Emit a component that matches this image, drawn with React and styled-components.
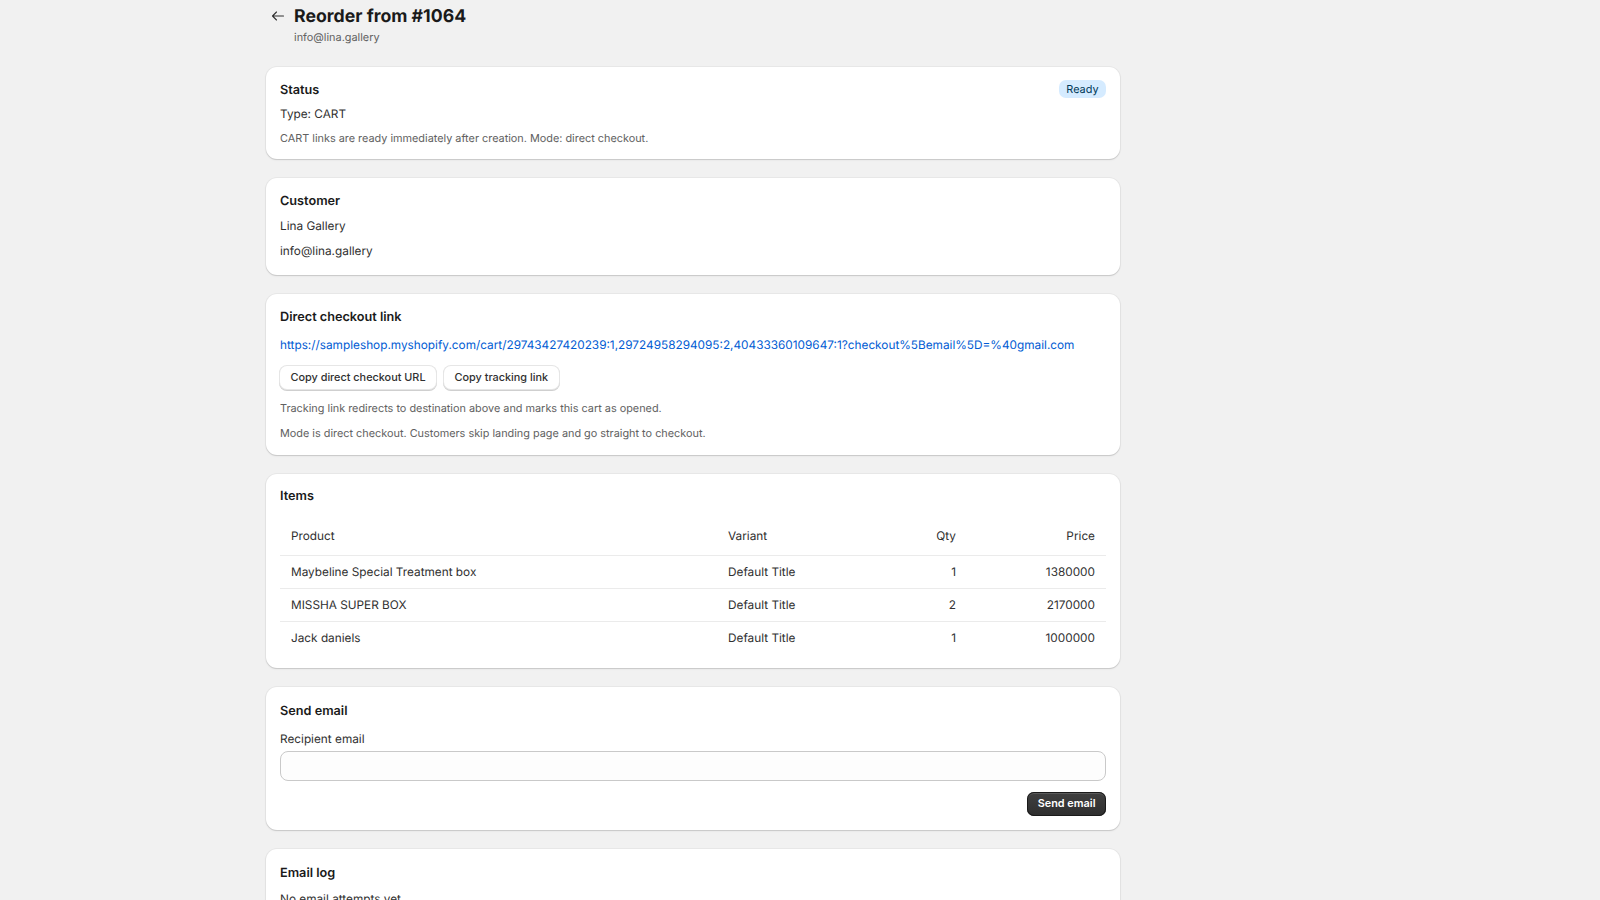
import React from "react";
import styled, { createGlobalStyle } from "styled-components";

const GlobalStyle = createGlobalStyle`
  html, body {
    margin: 0;
    height: 900px;
    overflow: hidden;
    background: #f1f1f1;
    font-family: Inter, "Liberation Sans", sans-serif;
    color: #303030;
    text-rendering: geometricPrecision;
    -webkit-font-smoothing: antialiased;
  }
`;

const Page = styled.div`
  width: 854px;
  margin-left: 266px;
  display: flex;
  flex-direction: column;
  gap: 19px;
`;

const PageHeader = styled.header`
  box-sizing: border-box;
  display: flex;
  gap: 6px;
  padding: 5px 0 0 2px;
  height: 48px;
`;

const BackButton = styled.button`
  width: 20px;
  height: 22px;
  padding: 0;
  border: 0;
  background: none;
  color: #303030;
  display: flex;
  align-items: center;
  justify-content: center;
`;

const TitleBlock = styled.div`
  display: flex;
  flex-direction: column;
`;

const Title = styled.h1`
  margin: 0;
  font-size: 17.7px;
  line-height: 24px;
  font-weight: 650;
  color: #1a1a1a;
`;

const Subtitle = styled.div`
  font-size: 10.9px;
  line-height: 16px;
  color: #616161;
`;

const Card = styled.section`
  background: #fff;
  border-radius: 11px;
  padding: ${(p) => p.$top || 14.5}px 14px ${(p) => p.$bottom || 14}px;
  box-shadow: 0 1px 0 0 rgba(26, 26, 26, 0.07), 0 0 0 1px rgba(26, 26, 26, 0.04),
    0 1px 2px rgba(26, 26, 26, 0.1);
  display: flex;
  flex-direction: column;
  gap: ${(p) => p.$gap}px;
`;

const CardTitle = styled.h2`
  margin: 0 0 -1.5px;
  font-size: 12.7px;
  line-height: 18px;
  font-weight: 600;
  color: #1a1a1a;
`;

const CardHead = styled.div`
  display: flex;
  justify-content: space-between;
  align-items: flex-start;
  margin-bottom: -1.5px;

  ${CardTitle} {
    margin: 0;
  }
`;

const Text = styled.p`
  margin: 0;
  line-height: 16px;
  color: ${(p) => (p.$muted ? "#616161" : "#303030")};
  font-size: ${(p) => (p.$muted ? "10.86px" : "11.8px")};
`;

const Badge = styled.span`
  background: #d5ebff;
  color: #003a5a;
  border-radius: 7px;
  margin-top: -1.5px;
  padding: 0 7.5px;
  font-size: 10.86px;
  line-height: 18px;
`;

const UrlLink = styled.a`
  color: #005bd3;
  font-size: 11.8px;
  line-height: 16px;
  text-decoration: none;
`;

const ButtonRow = styled.div`
  display: flex;
  gap: 8px;
  margin: 2px 0 -1px;
`;

const Button = styled.button`
  height: 23px;
  padding: 0 10.5px 1px;
  border: 0;
  border-radius: 7px;
  background: #fff;
  color: #303030;
  font: 500 10.86px Inter, sans-serif;
  box-shadow: 0 0 0 1px #e6e6e6, 0 1px 0 1px #cfcfcf;
`;

const PrimaryButton = styled(Button)`
  height: 24px;
  background: linear-gradient(#404040, #2e2e2e);
  color: #fff;
  font-weight: 600;
  box-shadow: inset 0 0 0 1px #1a1a1a, inset 0 2px 0 rgba(255, 255, 255, 0.14);
`;

const Notes = styled.div`
  display: flex;
  flex-direction: column;
  gap: 9px;
`;

const Table = styled.table`
  width: 100%;
  border-collapse: collapse;
  table-layout: fixed;
  font-size: 11.8px;
  color: #303030;
`;

const Th = styled.th`
  height: 38px;
  padding: 3px 11px 0;
  font-weight: 400;
  text-align: ${(p) => (p.$num ? "right" : "left")};
  border-bottom: 1px solid #ebebeb;
`;

const Td = styled.td`
  height: 32px;
  padding: 0 11px;
  text-align: ${(p) => (p.$num ? "right" : "left")};
`;

const Row = styled.tr`
  & + & td {
    border-top: 1px solid #ebebeb;
  }
`;

const Form = styled.div`
  display: flex;
  flex-direction: column;
  gap: 11px;
`;

const Field = styled.div`
  display: flex;
  flex-direction: column;
  gap: 4px;
`;

const Input = styled.input`
  height: 30px;
  box-sizing: border-box;
  border: 1px solid #c9c9c9;
  border-radius: 8px;
  background: #fdfdfd;
`;

const Actions = styled.div`
  display: flex;
  justify-content: flex-end;
`;

const items = [
  { name: "Maybeline Special Treatment box", qty: 1, price: 1380000 },
  { name: "MISSHA SUPER BOX", qty: 2, price: 2170000 },
  { name: "Jack daniels", qty: 1, price: 1000000 },
];

export default function App() {
  return (
    <>
      <GlobalStyle />
      <Page>
        <PageHeader>
          <BackButton aria-label="Back">
            <svg width="16" height="16" viewBox="0 0 16 16" fill="none" stroke="currentColor" strokeWidth="1.1" strokeLinecap="round" strokeLinejoin="round">
              <path d="M13.5 8H2.5M6.5 4 2.5 8l4 4" />
            </svg>
          </BackButton>
          <TitleBlock>
            <Title>Reorder from #1064</Title>
            <Subtitle>info@lina.gallery</Subtitle>
          </TitleBlock>
        </PageHeader>

        <Card $gap={8} $bottom={13}>
          <CardHead>
            <CardTitle>Status</CardTitle>
            <Badge>Ready</Badge>
          </CardHead>
          <Text>Type: CART</Text>
          <Text $muted>CART links are ready immediately after creation. Mode: direct checkout.</Text>
        </Card>

        <Card $gap={9} $bottom={16}>
          <CardTitle>Customer</CardTitle>
          <Text>Lina Gallery</Text>
          <Text>info@lina.gallery</Text>
        </Card>

        <Card $gap={11.5}>
          <CardTitle>Direct checkout link</CardTitle>
          <UrlLink href="#">https://sampleshop.myshopify.com/cart/29743427420239:1,29724958294095:2,40433360109647:1?checkout%5Bemail%5D=%40gmail.com</UrlLink>
          <ButtonRow>
            <Button>Copy direct checkout URL</Button>
            <Button>Copy tracking link</Button>
          </ButtonRow>
          <Notes>
            <Text $muted>Tracking link redirects to destination above and marks this cart as opened.</Text>
            <Text $muted>Mode is direct checkout. Customers skip landing page and go straight to checkout.</Text>
          </Notes>
        </Card>

        <Card $gap={9}>
          <CardTitle>Items</CardTitle>
          <Table>
            <colgroup>
              <col style={{ width: 437 }} />
              <col />
              <col style={{ width: 100 }} />
              <col style={{ width: 139 }} />
            </colgroup>
            <thead>
              <tr>
                <Th>Product</Th>
                <Th>Variant</Th>
                <Th $num>Qty</Th>
                <Th $num>Price</Th>
              </tr>
            </thead>
            <tbody>
              {items.map((item) => (
                <Row key={item.name}>
                  <Td>{item.name}</Td>
                  <Td>Default Title</Td>
                  <Td $num>{item.qty}</Td>
                  <Td $num>{item.price}</Td>
                </Row>
              ))}
            </tbody>
          </Table>
        </Card>

        <Card $gap={11} $top={16.5}>
          <CardTitle>Send email</CardTitle>
          <Form>
            <Field>
              <Text>Recipient email</Text>
              <Input type="email" />
            </Field>
            <Actions>
              <PrimaryButton>Send email</PrimaryButton>
            </Actions>
          </Form>
        </Card>

        <Card $gap={9} $top={16.5}>
          <CardTitle>Email log</CardTitle>
          <Text>No email attempts yet.</Text>
        </Card>
      </Page>
    </>
  );
}
